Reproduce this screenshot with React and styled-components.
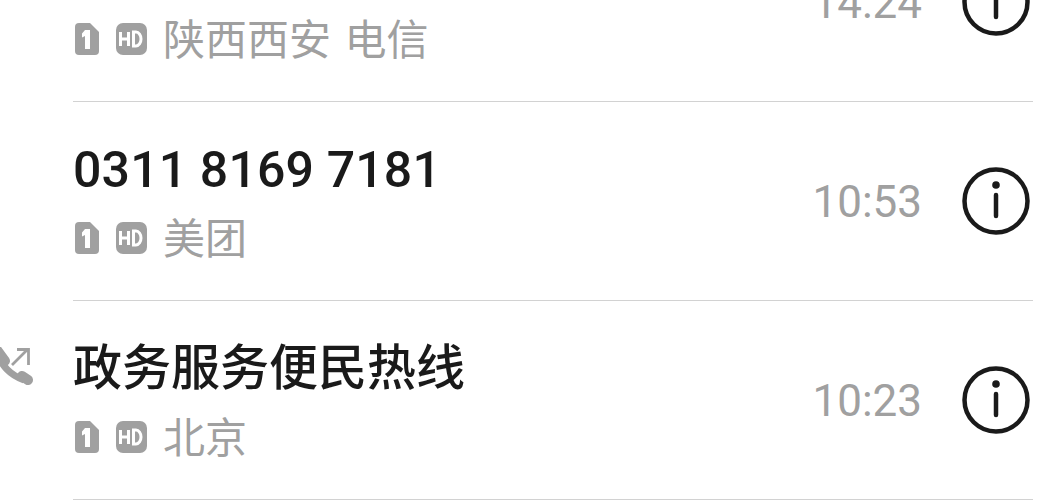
import React from "react";
import styled, { createGlobalStyle } from "styled-components";

const GlobalStyle = createGlobalStyle`
  html, body {
    margin: 0;
    padding: 0;
    background: #fff;
  }
`;

const Page = styled.div`
  width: 1057px;
  height: 500px;
  overflow: hidden;
  font-family: Roboto, "Noto Sans CJK SC", sans-serif;
`;

// the list is scrolled, so the first row is cut off at the top
const List = styled.div`
  margin-top: -97px;
  padding: 0 24px 0 73px;
`;

const Row = styled.div`
  position: relative;
  display: flex;
  align-items: center;
  height: 198px;
  border-bottom: 1px solid #d2d2d2;
`;

const Main = styled.div`
  flex: 1;
  display: flex;
  flex-direction: column;
  gap: 14px;
  padding-bottom: 4px;
`;

const Title = styled.div`
  min-height: 58px;
  font-size: ${(p) => (p.$numeric ? "50px" : "49px")};
  letter-spacing: ${(p) => (p.$numeric ? "0.15px" : "0")};
  line-height: 58px;
  font-weight: 500;
  color: #1a1a1a;
`;

const Sub = styled.div`
  display: flex;
  align-items: center;
  height: 44px;
  font-size: 42px;
  word-spacing: 3px;
  color: #a0a0a0;
`;

const SimIcon = styled.svg`
  width: 24px;
  height: 32px;
  margin: 5px 17px 0 2px;
`;

const HdIcon = styled.svg`
  width: 31px;
  height: 32px;
  margin: 5px 16px 0 0;
`;

const Time = styled.div`
  font-size: 44px;
  color: #a0a0a0;
  margin: 2px 39px 0 0;
`;

const Info = styled.svg`
  width: 70px;
  height: 70px;
  flex-shrink: 0;
  margin-right: 2px;
`;

const CallMark = styled.svg`
  position: absolute;
  left: -73px;
  top: 46px;
  width: 34px;
  height: 42px;
`;

const SimBadge = () => (
  <SimIcon viewBox="0 0 24 32">
    <path d="M4 0h11l9 9v19a4 4 0 0 1-4 4H4a4 4 0 0 1-4-4V4a4 4 0 0 1 4-4z" fill="#a0a0a0" />
    <path d="M10 7h5v19h-5V13l-3 1.500V10.500z" fill="#fff" />
  </SimIcon>
);

const HdBadge = () => (
  <HdIcon viewBox="0 0 31 32">
    <rect width="31" height="32" rx="7" fill="#a0a0a0" />
    <path
      d="M4.500 9v14M12.500 9v14M4.500 16h8M17.500 9v14h2.500a5 7 0 0 0 0-14z"
      fill="none"
      stroke="#fff"
      strokeWidth="3"
    />
  </HdIcon>
);

const InfoIcon = () => (
  <Info viewBox="0 0 70 70">
    <circle cx="35" cy="35" r="31.500" fill="none" stroke="#1a1a1a" strokeWidth="4.500" />
    <circle cx="35" cy="19" r="3.800" fill="#1a1a1a" />
    <path d="M35 29v21" fill="none" stroke="#1a1a1a" strokeWidth="4.500" strokeLinecap="round" />
  </Info>
);

const OutgoingCall = () => (
  <CallMark viewBox="0 0 34 42">
    <path
      d="M-3 3L5 14M22 29L28 33"
      fill="none"
      stroke="#a0a0a0"
      strokeWidth="10"
      strokeLinecap="round"
    />
    <path d="M-1 8C1 18 10 28 24 33" fill="none" stroke="#a0a0a0" strokeWidth="7" />
    <path d="M12 18L27 3M17 2.500h11.500V18" fill="none" stroke="#a0a0a0" strokeWidth="2.800" />
  </CallMark>
);

// the number of the first row is scrolled out of view
const calls = [
  { id: 1, title: "", place: "陕西西安 电信", time: "14:24" },
  { id: 2, title: "0311 8169 7181", numeric: true, place: "美团", time: "10:53" },
  { id: 3, title: "政务服务便民热线", place: "北京", time: "10:23", outgoing: true },
];

export default function App() {
  return (
    <Page>
      <GlobalStyle />
      <List>
        {calls.map((call) => (
          <Row key={call.id}>
            {call.outgoing && <OutgoingCall />}
            <Main>
              <Title $numeric={call.numeric}>{call.title}</Title>
              <Sub>
                <SimBadge />
                <HdBadge />
                {call.place}
              </Sub>
            </Main>
            <Time>{call.time}</Time>
            <InfoIcon />
          </Row>
        ))}
      </List>
    </Page>
  );
}
